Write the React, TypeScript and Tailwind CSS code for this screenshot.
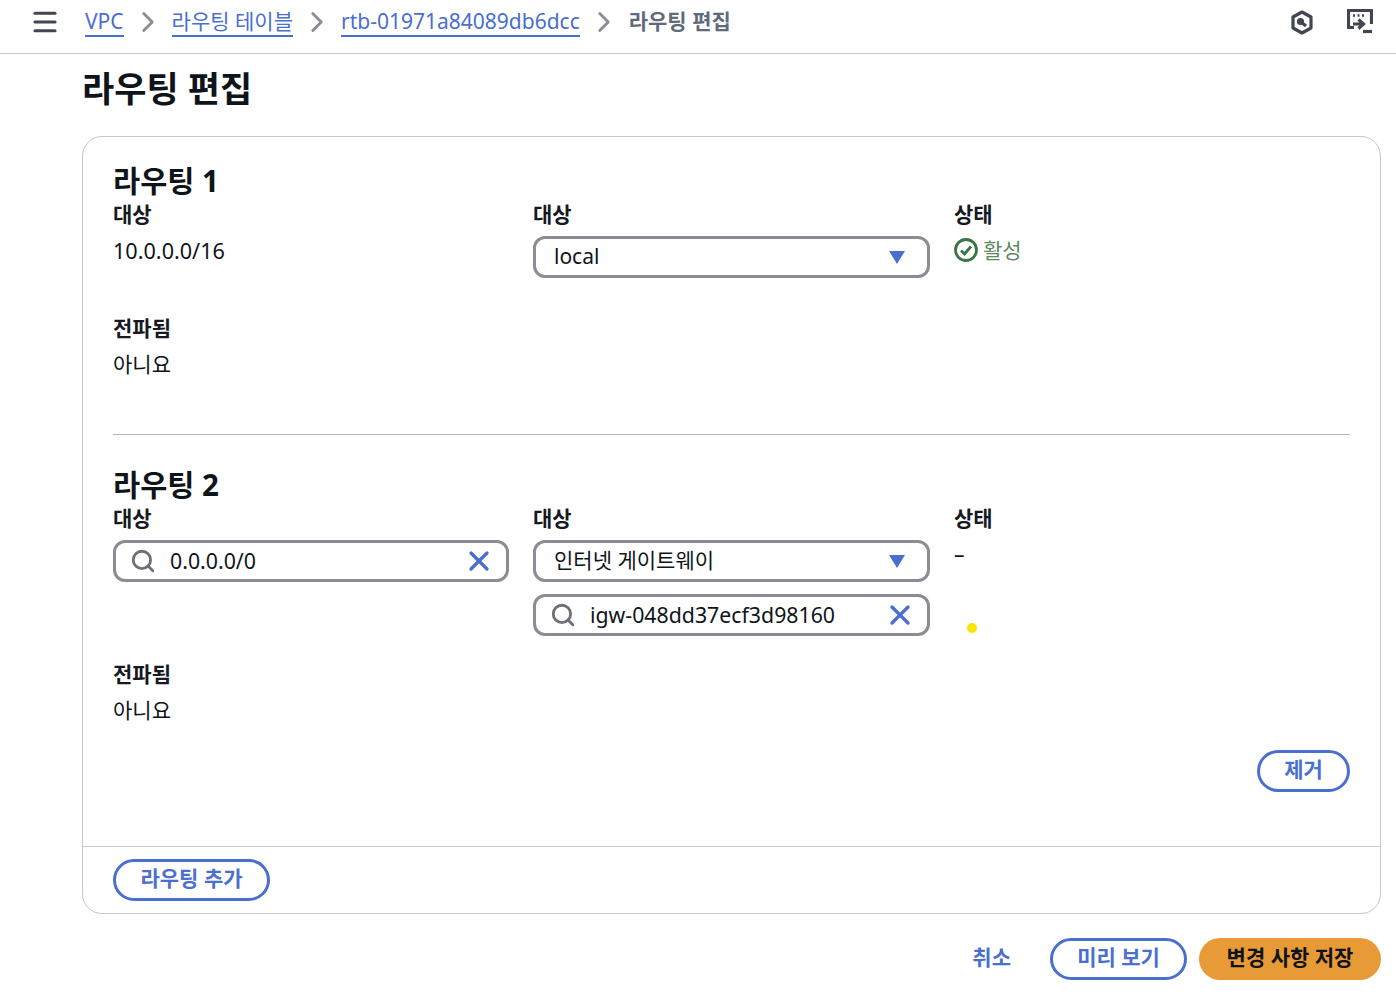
import { ChevronRight, Menu, Search, X } from 'lucide-react';

const font = '[font-family:"Noto_Sans","Noto_Sans_CJK_KR",sans-serif]';

function Crumb({ label }: { label: string }) {
  return (
    <>
      <a className="border-b-2 border-[#4a6fcf] text-[21px] leading-[28px] text-[#4a6fcf]">{label}</a>
      <ChevronRight className="mx-[7px] h-[34px] w-[34px] text-[#8c8c94]" strokeWidth={2} />
    </>
  );
}

function Label({ children }: { children: string }) {
  return <div className="text-[21px] font-bold leading-[26px] text-[#16191f]">{children}</div>;
}

function SelectBox({ value }: { value: string }) {
  return (
    <div className="flex h-[42px] w-[397px] items-center justify-between rounded-[12px] border-[3px] border-[#8c8c94] pl-[18px] pr-[22px] text-[21px] text-[#0f141a]">
      <span>{value}</span>
      <svg width="16" height="13" viewBox="0 0 16 13">
        <path d="M0 0h16L8 13z" fill="#4a6fcf" />
      </svg>
    </div>
  );
}

function SearchBox({ value, wide }: { value: string; wide?: boolean }) {
  return (
    <div className={`flex h-[42px] items-center rounded-[12px] border-[3px] border-[#8c8c94] pl-[14px] pr-[11px] text-[21.3px] text-[#0f141a] ${wide ? 'w-[397px]' : 'w-[396px]'}`}>
      <Search className="h-[26px] w-[26px] text-[#6f6f78]" strokeWidth={2.6} />
      <span className="ml-[14px] flex-1">{value}</span>
      <X className="h-[32px] w-[32px] text-[#4a6fcf]" strokeWidth={2.5} />
    </div>
  );
}

function PillButton({ label, className }: { label: string; className: string }) {
  return (
    <button className={`flex h-[42px] items-center justify-center rounded-full border-[3px] border-[#4a6fcf] pb-[2px] text-[21px] font-bold text-[#4a6fcf] ${className}`}>
      {label}
    </button>
  );
}

export default function App() {
  return (
    <div className={`h-[1002px] w-[1396px] overflow-hidden bg-white ${font}`}>
      <header className="flex h-[54px] items-center border-b border-[#c6c6cd] pb-[10px] pl-[30px] pr-[23px]">
        <Menu className="h-[30px] w-[30px] text-[#424650]" strokeWidth={2.5} />
        <div className="ml-[25px] flex flex-1 items-center">
          <Crumb label="VPC" />
          <Crumb label="라우팅 테이블" />
          <Crumb label="rtb-01971a84089db6dcc" />
          <span className="ml-px text-[21px] font-bold text-[#5f6b7a]">라우팅 편집</span>
        </div>
        <svg className="mt-[2px]" width="24" height="28" viewBox="0 0 24 28" fill="none" stroke="#424650" strokeWidth="3.2">
          <path d="M12 3l9 5v11l-9 5-9-5V8z" strokeLinejoin="round" />
          <circle cx="10.5" cy="12.5" r="2" fill="#424650" />
          <path d="M11 13l5 4" />
        </svg>
        <svg className="ml-[33px] mt-[2px]" width="26" height="28" viewBox="0 0 26 28" fill="none" stroke="#424650" strokeWidth="3.2">
          <path d="M7 18.500H1.500V1.500h23V15" />
          <path d="M6 6.500h2M10.500 6.500h2M15 6.500h2" strokeWidth="2.500" />
          <path d="M6 15h10M11.500 10.500l5 4.500-5 4.500" />
          <path d="M16 22.500h9" />
        </svg>
      </header>

      <main className="pl-[82px] pr-[15px]">
        <h1 className="text-[35px] font-bold leading-[70px] text-[#0f141a]">라우팅 편집</h1>
        <section className="mt-[12px] h-[778px] rounded-[20px] border border-[#c6c6cd]">
          <div className="h-[297px] px-[30px] pt-[24px]">
            <h2 className="text-[29.5px] font-bold leading-[40px] text-[#0f141a]">라우팅 1</h2>
            <div className="grid grid-cols-[396px_397px_1fr] gap-x-[24px]">
              <div>
                <Label>대상</Label>
                <div className="mt-[10px] text-[21.6px] leading-[28px] text-[#0f141a]">10.0.0.0/16</div>
              </div>
              <div>
                <Label>대상</Label>
                <div className="mt-[9px]"><SelectBox value="local" /></div>
              </div>
              <div>
                <Label>상태</Label>
                <div className="mt-[9px] flex items-center gap-[5px] text-[21px] leading-[28px] text-[#5b8a63]">
                  <svg width="24" height="24" viewBox="0 0 24 24" fill="none" stroke="#3a7544" strokeWidth="2.800">
                    <circle cx="12" cy="12" r="10.500" />
                    <path d="M7 12.500l3.500 3.500L17 8.500" />
                  </svg>
                  활성
                </div>
              </div>
            </div>
            <div className="mt-[37px]">
              <Label>전파됨</Label>
              <div className="mt-[9px] text-[21px] leading-[28px] text-[#0f141a]">아니요</div>
            </div>
          </div>
          <div className="mx-[30px] h-px bg-[#b4b4bb]" />
          <div className="relative h-[411px] px-[30px] pt-[30px]">
            <h2 className="text-[29.5px] font-bold leading-[40px] text-[#0f141a]">라우팅 2</h2>
            <div className="grid grid-cols-[396px_397px_1fr] gap-x-[24px]">
              <div>
                <Label>대상</Label>
                <div className="mt-[9px]"><SearchBox value="0.0.0.0/0" /></div>
              </div>
              <div>
                <Label>대상</Label>
                <div className="mt-[9px] flex flex-col gap-[12px]">
                  <SelectBox value="인터넷 게이트웨이" />
                  <SearchBox value="igw-048dd37ecf3d98160" wide />
                </div>
              </div>
              <div>
                <Label>상태</Label>
                <div className="mt-[9px] text-[21px] leading-[28px] text-[#0f141a]">–</div>
                {/* cursor highlight */}
                <div className="ml-[13px] mt-[55px] h-[10px] w-[10px] rounded-full bg-[#fce300]" />
              </div>
            </div>
            <div className="mt-[25px]">
              <Label>전파됨</Label>
              <div className="mt-[9px] text-[21px] leading-[28px] text-[#0f141a]">아니요</div>
            </div>
            <div className="mt-[26px] flex justify-end">
              <PillButton label="제거" className="w-[93px]" />
            </div>
          </div>
          <div className="flex h-[67px] items-center border-t border-[#c6c6cd] px-[30px]">
            <PillButton label="라우팅 추가" className="w-[157px]" />
          </div>
        </section>
        <div className="mt-[24px] flex items-center justify-end">
          <span className="mr-[39px] pb-[2px] text-[21px] font-bold text-[#4a6fcf]">취소</span>
          <PillButton label="미리 보기" className="w-[137px]" />
          <button className="ml-[12px] flex h-[42px] w-[182px] items-center justify-center rounded-full bg-[#e89a37] pb-[2px] text-[21px] font-bold text-[#0f141a]">
            변경 사항 저장
          </button>
        </div>
      </main>
    </div>
  );
}
